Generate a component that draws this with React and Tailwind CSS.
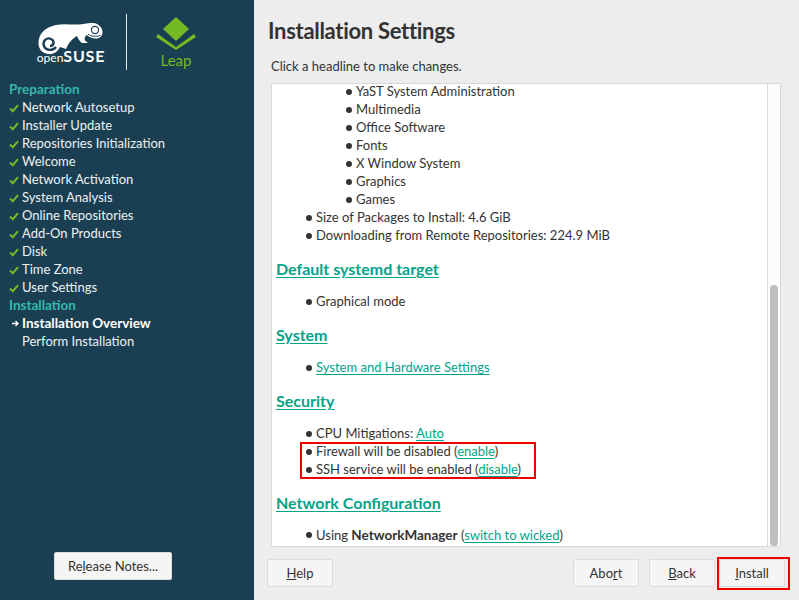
const font = { fontFamily: 'Lato, "Noto Sans", sans-serif' };

const steps = [
  "Network Autosetup",
  "Installer Update",
  "Repositories Initialization",
  "Welcome",
  "Network Activation",
  "System Analysis",
  "Online Repositories",
  "Add-On Products",
  "Disk",
  "Time Zone",
  "User Settings",
];

const patterns = ["YaST System Administration", "Multimedia", "Office Software", "Fonts", "X Window System", "Graphics", "Games"];

function Check() {
  return (
    <svg width="10" height="9" viewBox="0 0 10 9" className="shrink-0">
      <path d="M1 4.5 L3.8 7.2 L9 1.2" fill="none" stroke="#73ba25" strokeWidth="2" />
    </svg>
  );
}

function Arrow() {
  return (
    <svg width="10" height="9" viewBox="0 0 10 9" className="shrink-0">
      <path d="M3 4.5H9M6.5 2L9 4.5L6.5 7" fill="none" stroke="#fff" strokeWidth="1.3" />
    </svg>
  );
}

function Step({ icon, children, bold }) {
  return (
    <div className={`flex h-[18px] items-center ${bold ? "text-[13.5px] font-bold text-white" : "pt-[2px] text-[13px] text-[#eef1f2]"}`}>
      <span className="flex w-[13px] justify-start">{icon}</span>
      {children}
    </div>
  );
}

function Logo() {
  return (
    <div className="flex h-[80px] items-start pl-[36px] pt-[14px]">
      <div className="flex w-[70px] flex-col items-center pt-[7px]">
        <svg width="66" height="34" viewBox="38 20 66 34">
          <path
            d="M38.5 42C38.5 32 46 26 56 24C64 22.5 72 24 78 23.5C84 23 88 21.5 93 22C99 22.5 102.5 27 102.5 31C102.5 35 100 37.5 96 37.5C92 37.5 89 36 87 34C85 35 84 37 85 39.5L88 42L82 42C79 40 78 37 77 35C73 37 69 41 66 48L60 46C58 50 54 54 48 53C42 52 38.5 48 38.5 42Z"
            fill="#fff"
          />
          <circle cx="95" cy="29" r="3.6" fill="none" stroke="#1a3f52" strokeWidth="1.2" />
          <path d="M88 33C91 35.5 96 36 100.5 34.5" fill="none" stroke="#1a3f52" strokeWidth="1" />
          <path d="M56 46C53 50 46 50 44 45C42 40 47 36 51 38C55 40 54 45 50 45" fill="none" stroke="#1a3f52" strokeWidth="2.4" />
        </svg>
        <div className="mt-[-6px] flex items-baseline whitespace-nowrap leading-[14px] text-white">
          <span className="text-[12px]">open</span>
          <span className="text-[16px] font-bold tracking-[0.8px]">SUSE</span>
        </div>
      </div>
      <div className="ml-[20px] h-[56px] w-px bg-[#e8ecee]" />
      <div className="ml-[29px] flex flex-col items-center pt-[3px]">
        <svg width="40" height="33" viewBox="0 0 40 33">
          <path d="M20 0L33 12L20 24L7 12Z" fill="#73ba25" />
          <path d="M2 17L20 30L38 17L40 20L20 33L0 20Z" fill="#73ba25" />
        </svg>
        <div className="text-[15px] leading-[20px] text-[#73ba25]">Leap</div>
      </div>
    </div>
  );
}

function Sidebar() {
  return (
    <div className="flex h-[600px] w-[254px] shrink-0 flex-col bg-[#1a3f52]">
      <Logo />
      <div className="flex-1 pl-[9px]">
        <div className="flex h-[18px] items-center text-[13.5px] font-bold text-[#35b9ab]">Preparation</div>
        {steps.map((s) => (
          <Step key={s} icon={<Check />}>{s}</Step>
        ))}
        <div className="flex h-[18px] items-center text-[13.5px] font-bold text-[#35b9ab]">Installation</div>
        <Step bold icon={<Arrow />}>Installation Overview</Step>
        <Step>Perform Installation</Step>
      </div>
      <div className="flex justify-center pb-[20px] pr-[28px]">
        <Button className="h-[28px] w-[118px]"><span>Re<u>l</u>ease Notes...</span></Button>
      </div>
    </div>
  );
}

function Button({ children, className = "" }) {
  return (
    <button className={`flex items-center justify-center rounded-[2px] border border-[#dcdcdc] bg-[#f5f5f5] pt-[2px] text-[13px] text-[#333] ${className}`}>
      {children}
    </button>
  );
}

function Link({ children }) {
  return <span className="text-[#00a489] underline underline-offset-2">{children}</span>;
}

function Bullet({ children, nested }) {
  return (
    <div className={`flex h-[18px] items-center whitespace-pre pt-[2px] text-[13px] text-[#333] ${nested ? "pl-[74px]" : "pl-[34px]"}`}>
      <span className="mr-[4px] h-[6px] w-[6px] rounded-full bg-[#333]" />
      <span>{children}</span>
    </div>
  );
}

function Heading({ children, className = "" }) {
  return (
    <div className={`pl-[4px] text-[16px] font-bold leading-[22px] text-[#00a489] underline underline-offset-2 ${className}`}>
      {children}
    </div>
  );
}

export default function App() {
  return (
    <div className="relative flex h-[600px] w-[799px] overflow-hidden bg-[#ededed]" style={font}>
      <Sidebar />
      <div className="flex min-w-0 flex-1 flex-col">
        <h1 className="pl-[14px] pt-[15px] text-[22px] font-bold leading-[32px] tracking-[-0.3px] text-[#333]">Installation Settings</h1>
        <p className="pl-[17px] pt-[10px] text-[13px] leading-[18px] text-[#333]">Click a headline to make changes.</p>
        <div className="ml-[17px] mt-[8px] flex h-[464px] w-[510px] overflow-hidden rounded-[2px] border border-[#d8d8d8] bg-white">
          <div className="mt-[-2px] flex-1">
            {patterns.map((p) => (
              <Bullet nested key={p}>{p}</Bullet>
            ))}
            <Bullet>Size of Packages to Install: 4.6 GiB</Bullet>
            <Bullet>Downloading from Remote Repositories: 224.9 MiB</Bullet>
            <Heading className="mt-[14px]">Default systemd target</Heading>
            <div className="mt-[12px]"><Bullet>Graphical mode</Bullet></div>
            <Heading className="mt-[14px]">System</Heading>
            <div className="mt-[12px]"><Bullet><Link>System and Hardware Settings</Link></Bullet></div>
            <Heading className="mt-[14px]">Security</Heading>
            <div className="mt-[12px]">
              <Bullet>CPU Mitigations: <Link>Auto</Link></Bullet>
              <Bullet>Firewall will be disabled (<Link>enable</Link>)</Bullet>
              <Bullet>SSH service will be enabled (<Link>disable</Link>)</Bullet>
            </div>
            <Heading className="mt-[14px]">Network Configuration</Heading>
            <div className="mt-[11px]">
              <Bullet>Using <b className="text-[13.5px]">NetworkManager</b> (<Link>switch to wicked</Link>)</Bullet>
            </div>
          </div>
          <div className="w-[13px] shrink-0 border-l border-[#d8d8d8] bg-[#fcfcfc] pl-[2px]">
            <div className="mt-[201px] h-[261px] w-[8px] rounded-full bg-[#bebebe]" />
          </div>
        </div>
        <div className="flex pl-[13px] pr-[14px] pt-[12px]">
          <Button className="h-[28px] w-[66px]"><span><u>H</u>elp</span></Button>
          <Button className="ml-auto h-[28px] w-[66px]"><span>Abo<u>r</u>t</span></Button>
          <Button className="ml-[10px] h-[28px] w-[66px]"><span><u>B</u>ack</span></Button>
          <Button className="ml-[4px] h-[28px] w-[66px]"><span><u>I</u>nstall</span></Button>
        </div>
      </div>
      <div className="pointer-events-none absolute left-[300px] top-[442px] h-[37px] w-[236px] border-2 border-[#ee0000]" />
      <div className="pointer-events-none absolute left-[717px] top-[557px] h-[33px] w-[73px] border-2 border-[#ee0000]" />
    </div>
  );
}
